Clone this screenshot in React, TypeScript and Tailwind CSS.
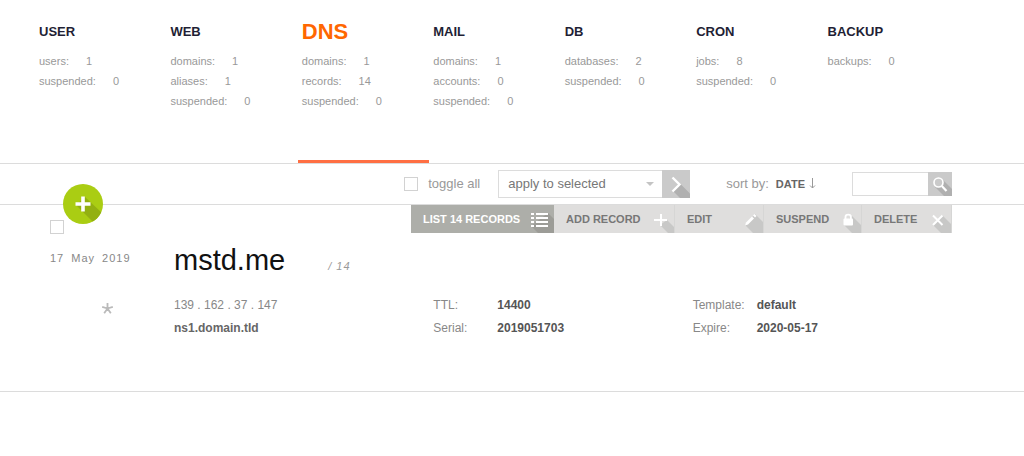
import React from "react";

type Stat = { label: string; value: number };
type Section = { title: string; active?: boolean; stats: Stat[] };

const sections: Section[] = [
  { title: "USER", stats: [{ label: "users", value: 1 }, { label: "suspended", value: 0 }] },
  {
    title: "WEB",
    stats: [
      { label: "domains", value: 1 },
      { label: "aliases", value: 1 },
      { label: "suspended", value: 0 },
    ],
  },
  {
    title: "DNS",
    active: true,
    stats: [
      { label: "domains", value: 1 },
      { label: "records", value: 14 },
      { label: "suspended", value: 0 },
    ],
  },
  {
    title: "MAIL",
    stats: [
      { label: "domains", value: 1 },
      { label: "accounts", value: 0 },
      { label: "suspended", value: 0 },
    ],
  },
  { title: "DB", stats: [{ label: "databases", value: 2 }, { label: "suspended", value: 0 }] },
  { title: "CRON", stats: [{ label: "jobs", value: 8 }, { label: "suspended", value: 0 }] },
  { title: "BACKUP", stats: [{ label: "backups", value: 0 }] },
];

function NavItem({ section }: { section: Section }) {
  return (
    <a
      href="#"
      className={
        section.active
          ? "block border-b-3 border-[#ff6f43] pt-5 pl-1"
          : "block border-b-3 border-transparent pt-5 pl-1"
      }
    >
      <h2
        className={
          section.active
            ? "text-[22px] leading-6 font-bold text-[#ff6701]"
            : "text-[13px] leading-6 font-bold text-[#1f1f35]"
        }
      >
        {section.title}
      </h2>
      <ul className="mt-[7px] text-[11px] leading-5 text-[#999]">
        {section.stats.map((s) => (
          <li key={s.label} className="flex gap-[17px]">
            <span>{s.label}:</span>
            <span>{s.value}</span>
          </li>
        ))}
      </ul>
    </a>
  );
}

function ListIcon() {
  return (
    <svg width="24" height="28" viewBox="0 0 24 28" aria-hidden="true">
      <path d="M18 8 24 14V28H8L1 21Z" fill="#9c9c97" />
      <path
        d="M1 9H4M6 9H18M1 13H4M6 13H18M1 17H4M6 17H18M1 21H4M6 21H18"
        stroke="#fff"
        strokeWidth="2"
      />
    </svg>
  );
}

function AddIcon() {
  return (
    <svg width="24" height="28" viewBox="0 0 24 28" aria-hidden="true">
      <path d="M17 15 24 22V28H18L10 20Z" fill="#c8c8c7" />
      <path d="M4 15H17M11 9V21" stroke="#fff" strokeWidth="2" />
    </svg>
  );
}

function EditIcon() {
  return (
    <svg width="24" height="28" viewBox="0 0 24 28" aria-hidden="true">
      <path d="M16 9 24 17V28H14L6 20Z" fill="#c8c8c7" />
      <path d="M6 20.500 7 17.500 13 11.500 15 13.500 9 19.500Z" fill="#fff" />
      <path d="M14 10.500 15.500 9 17.500 11 16 12.500Z" fill="#fff" />
    </svg>
  );
}

function LockIcon() {
  return (
    <svg width="24" height="28" viewBox="0 0 24 28" aria-hidden="true">
      <path d="M15 11 24 20V28H15L7 20Z" fill="#c8c8c7" />
      <rect x="6.500" y="13.500" width="9.500" height="7" rx="1" fill="#fff" />
      <path d="M8.500 14V12a2.700 2.300 0 0 1 5.400 0V14" fill="none" stroke="#fff" strokeWidth="1.800" />
    </svg>
  );
}

function DeleteIcon() {
  return (
    <svg width="24" height="28" viewBox="0 0 24 28" aria-hidden="true">
      <path d="M15 10 24 19V28H14L6 20Z" fill="#c8c8c7" />
      <path d="M6 10.500 15.500 20M15.500 10.500 6 20" stroke="#fff" strokeWidth="2" />
    </svg>
  );
}

const actions = [
  { label: "ADD RECORD", icon: <AddIcon />, width: "w-[121px]" },
  { label: "EDIT", icon: <EditIcon />, width: "w-[89px]" },
  { label: "SUSPEND", icon: <LockIcon />, width: "w-[98px]" },
  { label: "DELETE", icon: <DeleteIcon />, width: "w-[90px]" },
];

const checkbox = "block size-[14px] shrink-0 appearance-none border border-[#d2d2d2] bg-white checked:bg-[#aacd13]";

export default function App() {
  return (
    <div className="bg-white font-['Liberation_Sans',Arial,sans-serif] text-xs text-[#777]">
      <nav className="border-b border-[#dcdcdc] pr-[69px] pl-[35px]">
        <div className="grid min-h-[163px] grid-cols-7">
          {sections.map((s) => (
            <NavItem key={s.title} section={s} />
          ))}
        </div>
      </nav>

      <div className="relative flex h-[41px] items-center justify-end border-b border-[#dcdcdc] pr-[72px] text-[13px] text-[#999]">
        <button
          type="button"
          aria-label="Add DNS domain"
          className="absolute top-5 left-[63px] z-10 size-10 rounded-full"
        >
          <svg width="40" height="40" viewBox="0 0 40 40" aria-hidden="true">
            <circle cx="20" cy="20" r="20" fill="#aacd13" />
            <path d="M22 13 38.200 28.200A20 20 0 0 1 29.500 37.600L13 21Z" fill="#93b011" />
            <path d="M20 12.500V27.500M12.500 20H27.500" stroke="#fff" strokeWidth="3.600" />
          </svg>
        </button>

        <label className="flex items-center gap-[10px]">
          <input type="checkbox" className={checkbox} />
          toggle all
        </label>

        <form className="ml-[18px] flex h-7" onSubmit={(e) => e.preventDefault()}>
          <div className="relative">
            <select
              aria-label="Bulk action"
              className="block h-7 w-[164px] appearance-none border border-r-0 border-[#dcdcdc] bg-white pr-6 pl-[9px] text-[13px] text-[#777]"
            >
              <option>apply to selected</option>
              <option>suspend</option>
              <option>delete</option>
            </select>
            <svg className="pointer-events-none absolute top-3 right-2" width="8" height="4" viewBox="0 0 8 4" aria-hidden="true">
              <path d="M0 0H8L4 4Z" fill="#c4c4c4" />
            </svg>
          </div>
          <button type="submit" aria-label="Apply" className="size-7 bg-[#cacaca]">
            <svg width="28" height="28" viewBox="0 0 28 28" aria-hidden="true">
              <path d="M18.500 14 28 23.500V28H18L11 21Z" fill="#b0b0b0" />
              <path d="M10.500 7.500 17.500 14.500 10.500 21.500" fill="none" stroke="#fff" strokeWidth="2.400" />
            </svg>
          </button>
        </form>

        <div className="ml-9 flex items-center gap-[7px]">
          <span>sort by:</span>
          <button type="button" className="flex items-center gap-1 text-[11px] font-bold text-[#666]">
            DATE
            <svg width="7" height="11" viewBox="0 0 7 11" aria-hidden="true">
              <path d="M3.500 0V10M1 7.500 3.500 10 6 7.500" fill="none" stroke="#999" />
            </svg>
          </button>
        </div>

        <form className="ml-9 flex h-6" onSubmit={(e) => e.preventDefault()}>
          <input
            type="text"
            aria-label="Search"
            className="w-[76px] border border-r-0 border-[#dcdcdc] bg-white px-1 text-xs outline-none"
          />
          <button type="submit" aria-label="Search" className="size-6 bg-[#cacaca]">
            <svg width="24" height="24" viewBox="0 0 24 24" aria-hidden="true">
              <path d="M15 8 24 17V24H16L7 15Z" fill="#b0b0b0" />
              <circle cx="10.500" cy="10.500" r="4.500" fill="#cacaca" stroke="#fff" strokeWidth="1.600" />
              <path d="M13.800 14 18.500 19" stroke="#fff" strokeWidth="2.200" />
            </svg>
          </button>
        </form>
      </div>

      <main className="border-b border-[#dcdcdc] pr-[72px] pb-[51px] pl-[50px]">
        <div className="flex justify-between">
          <input type="checkbox" aria-label="Select mstd.me" className={checkbox + " mt-[15px]"} />
          <div className="flex h-7 text-[11px] font-bold">
            <button type="button" className="flex w-[143px] items-center justify-between bg-[#adaea9] pl-3 text-white">
              LIST 14 RECORDS
              <ListIcon />
            </button>
            {actions.map((a) => (
              <button
                key={a.label}
                type="button"
                className={
                  a.width +
                  " flex items-center justify-between border-r border-[#d6d6d5] bg-[#dfdedd] pl-3 text-[#777]"
                }
              >
                {a.label}
                {a.icon}
              </button>
            ))}
          </div>
        </div>

        <div className="mt-2 flex">
          <div className="w-[124px] shrink-0 pt-[6px] text-[11px] leading-5">
            <div className="flex gap-[7px] tracking-[1px] text-[#888]">
              <span>17</span>
              <span>May</span>
              <span>2019</span>
            </div>
            <svg className="mt-[34px] ml-[51px]" width="13" height="13" viewBox="0 0 13 13" aria-label="Not starred">
              <path
                d="M6.500 6.500V1M6.500 6.500 1.200 4.900M6.500 6.500 11.800 4.900M6.500 6.500 3.200 11.200M6.500 6.500 9.800 11.200"
                stroke="#bababa"
                strokeWidth="1.800"
              />
            </svg>
          </div>
          <div className="grow">
            <div className="flex items-baseline gap-[43px]">
              <h1 className="text-[29px] leading-9 text-[#111]">mstd.me</h1>
              <span className="text-[11px] tracking-[1px] text-[#999] italic">/ 14</span>
            </div>
            <div className="mt-4 grid grid-cols-3 leading-[23px]">
              <div>
                <div className="text-[#888]">139 . 162 . 37 . 147</div>
                <div className="font-bold text-[#666]">ns1.domain.tld</div>
              </div>
              <dl className="grid grid-cols-[64px_1fr]">
                <dt className="text-[#888]">TTL:</dt>
                <dd className="font-bold text-[#555]">14400</dd>
                <dt className="text-[#888]">Serial:</dt>
                <dd className="font-bold text-[#555]">2019051703</dd>
              </dl>
              <dl className="grid grid-cols-[64px_1fr]">
                <dt className="text-[#888]">Template:</dt>
                <dd className="font-bold text-[#555]">default</dd>
                <dt className="text-[#888]">Expire:</dt>
                <dd className="font-bold text-[#555]">2020-05-17</dd>
              </dl>
            </div>
          </div>
        </div>
      </main>
    </div>
  );
}
